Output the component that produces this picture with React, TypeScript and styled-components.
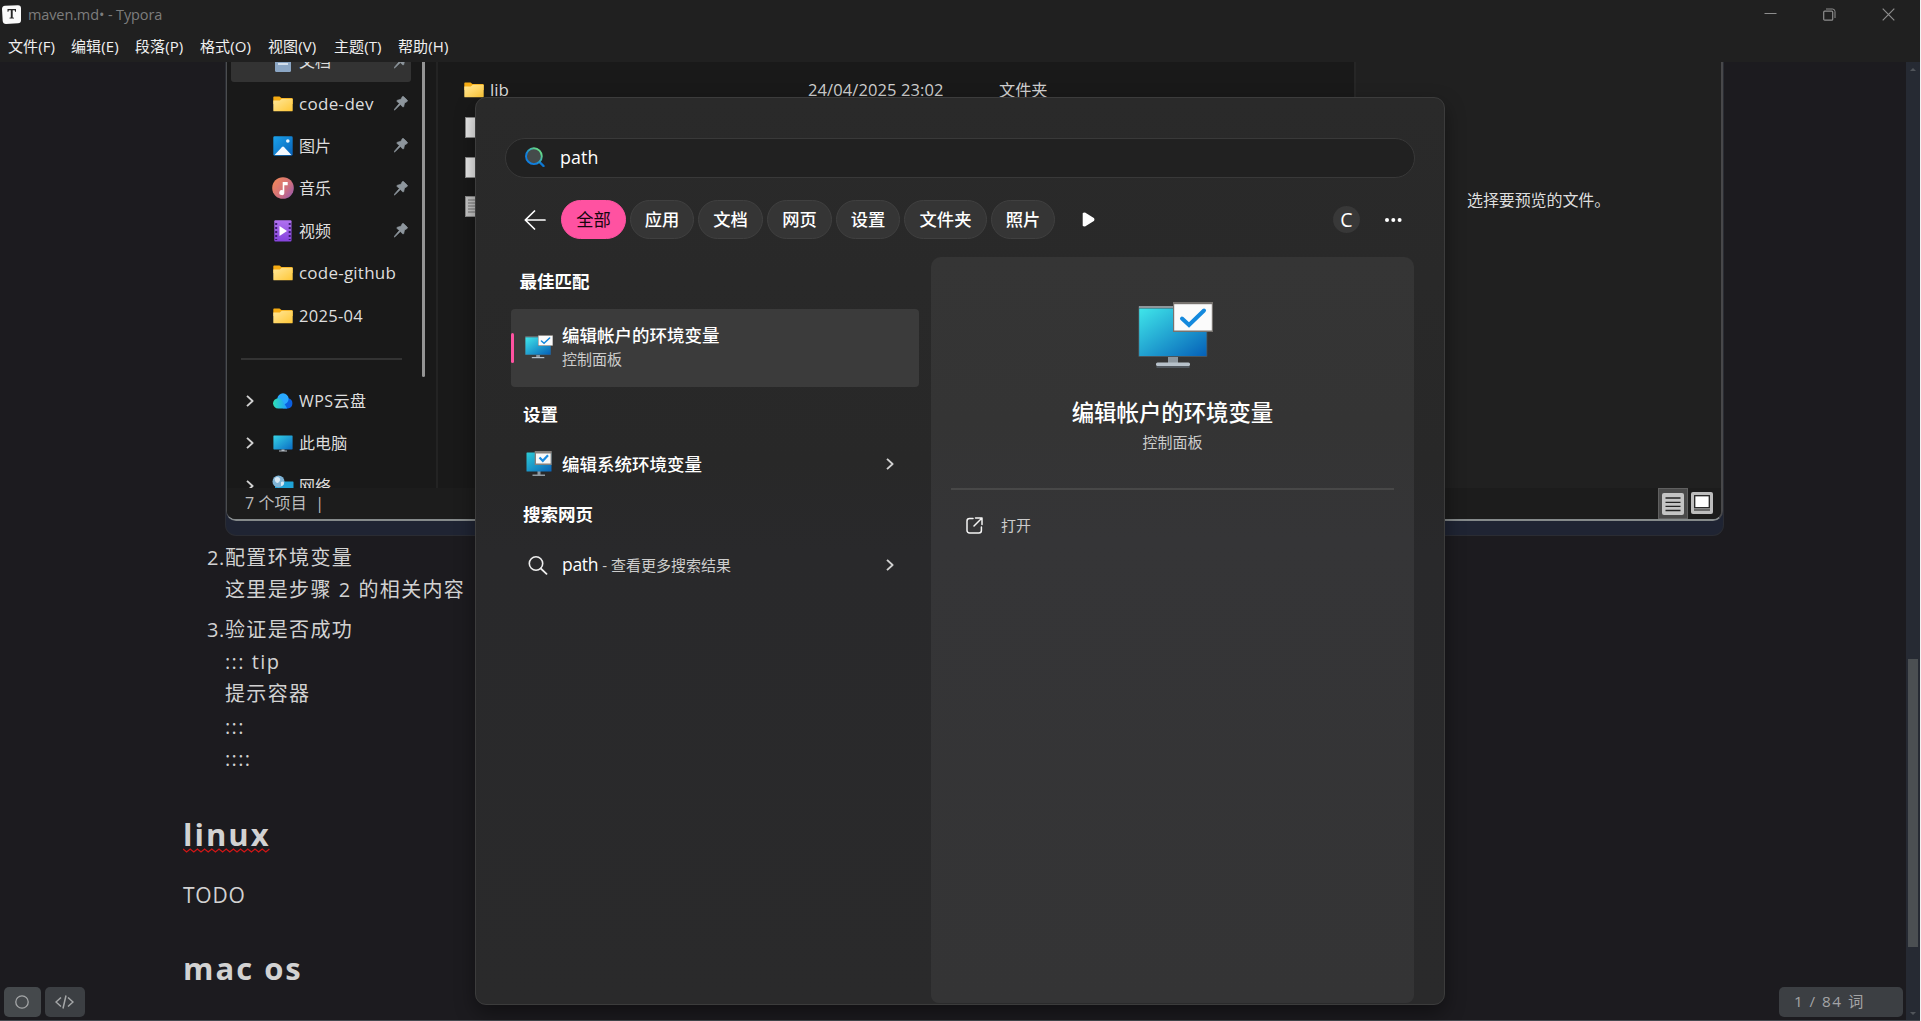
import React from "react";
import styled, { createGlobalStyle } from "styled-components";

const UI = `"Open Sans", "Noto Sans CJK SC", sans-serif`;

const Global = createGlobalStyle`
  * { box-sizing: border-box; }
  html, body { margin: 0; padding: 0; background: #1c1b1f; overflow: hidden; }
  svg { display: block; flex: none; }
`;

/* ---------- application frame ---------- */

const Window = styled.div`
  position: relative;
  width: 1921px;
  height: 1021px;
  display: flex;
  flex-direction: column;
  overflow: hidden;
  background: #1c1b1f;
  border-right: 1px solid #f3f3f3;
  font-family: ${UI};
  white-space: nowrap;
`;

const TitleBar = styled.header`
  height: 30px;
  flex: none;
  display: flex;
  align-items: center;
  padding: 0 0 2px 2px;
  background: #202020;
`;

const AppTitle = styled.span`
  flex: 1;
  margin-left: 7px;
  padding-top: 1px;
  font-size: 14.5px;
  letter-spacing: -0.12px;
  line-height: 20px;
  color: #7d7d7d;
`;

const WindowControls = styled.div`
  display: flex;
  gap: 46px;
  padding-right: 25px;
  color: #8d8d8d;
`;

const MenuBar = styled.nav`
  height: 32px;
  flex: none;
  display: flex;
  align-items: center;
  padding-left: 8px;
  background: #202020;
`;

const MenuItem = styled.span<{ $w: number }>`
  width: ${(p) => p.$w}px;
  font-size: 15px;
  line-height: 20px;
  letter-spacing: 0.1px;
  color: #f0f0f0;
`;

const Workspace = styled.main`
  flex: 1;
  min-height: 0;
  display: flex;
  border-bottom: 1px solid #454a50;
`;

const Document = styled.article`
  flex: 1;
  min-width: 0;
  overflow: hidden;
  color: #d2d2d2;
`;

const ScrollTrack = styled.div`
  width: 14px;
  flex: none;
  display: flex;
  flex-direction: column;
  align-items: center;
  padding: 6px 0 5px;
  background: #262a33;
`;

const ScrollThumb = styled.div`
  width: 10px;
  height: 288px;
  margin: 588px 0 auto;
  background: #4b4f52;
`;

/* ---------- embedded picture of a file explorer ---------- */

const Figure = styled.figure`
  width: 1499px;
  height: 474px;
  margin: 0 0 0 225px;
  background: #1f2433;
  border: 1px solid #2a2c33;
  border-top: 0;
  border-radius: 0 0 11px 11px;
`;

const Explorer = styled.div`
  height: 459px;
  display: flex;
  flex-direction: column;
  overflow: hidden;
  border: 1px solid #4b4d4f;
  border-top: 0;
  border-right: 2px solid #48484a;
  border-bottom: 2px solid #858a8b;
  border-radius: 0 0 10px 10px;
  background: #191919;
  color: #dedede;
`;

const ExplorerBody = styled.div`
  height: 426px;
  flex: none;
  display: flex;
  overflow: hidden;
`;

const NavPane = styled.div`
  width: 191px;
  flex: none;
  height: 470px;
  margin-top: -22px;
  padding-left: 4px;
`;

const NavRow = styled.div<{ $active?: boolean }>`
  width: 180px;
  height: 42.4px;
  display: flex;
  align-items: center;
  border-radius: 3px;
  background: ${(p) => (p.$active ? "#333333" : "transparent")};
`;

const NavChevron = styled.span`
  width: 42px;
  display: flex;
  padding-left: 15px;
`;

const NavIcon = styled.span`
  width: 20px;
  display: flex;
  justify-content: center;
`;

const NavLabel = styled.span<{ $ls?: number; $size?: number }>`
  flex: 1;
  margin-left: 6px;
  font-size: ${(p) => p.$size ?? 16}px;
  line-height: 22px;
  letter-spacing: ${(p) => p.$ls ?? 0}px;
`;

const NavPin = styled.span`
  width: 17px;
`;

const NavRule = styled.div`
  height: 43px;
  display: flex;
  align-items: center;
  padding: 1px 0 0 10px;

  &::after {
    content: "";
    width: 161px;
    height: 2px;
    background: #333333;
  }
`;

const NavScroll = styled.div`
  width: 3px;
  height: 315px;
  margin-left: 4px;
  flex: none;
  border-radius: 0 0 2px 2px;
  background: #949494;
`;

const FileList = styled.div`
  width: 918px;
  flex: none;
  margin-left: 11px;
  padding: 12px 0 0 26px;
  border-left: 2px solid #232323;
`;

const FileRow = styled.div`
  height: 31px;
  display: grid;
  grid-template-columns: 26px 318px 191px auto;
  align-items: center;
  font-size: 17px;
  line-height: 22px;
`;

const FileDate = styled.span`
  font-size: 16.5px;
  letter-spacing: 0.1px;
  color: #cfcfcf;
`;

const FileKind = styled.span`
  font-size: 16.2px;
  color: #cfcfcf;
`;

const FileStack = styled.div`
  display: flex;
  flex-direction: column;
  gap: 18.5px;
  padding: 12px 0 0 1px;
`;

const PreviewPane = styled.div`
  flex: 1;
  padding: 126px 0 0 111px;
  border-left: 2px solid #262626;
  background: #202020;
  font-size: 16px;
  line-height: 24px;
  letter-spacing: -0.1px;
`;

const StatusBar = styled.div`
  flex: 1;
  display: flex;
  align-items: center;
  padding: 0 5px 0 18px;
  background: #1c1c1c;
  font-size: 16px;
  line-height: 20px;
  color: #bcbcbc;
`;

const StatusText = styled.span`
  flex: 1;
  padding-bottom: 2px;
  white-space: pre;
  letter-spacing: 0.1px;
`;

const ViewButton = styled.span<{ $on?: boolean }>`
  width: ${(p) => (p.$on ? 30 : 28)}px;
  height: 31px;
  display: flex;
  align-items: center;
  justify-content: center;
  padding-bottom: ${(p) => (p.$on ? 0 : 2)}px;
  background: ${(p) => (p.$on ? "#4a4a4a" : "transparent")};
  border: 1px solid ${(p) => (p.$on ? "#606060" : "transparent")};
`;

/* ---------- markdown body ---------- */

const Steps = styled.ol`
  list-style: none;
  margin: 6px 0 0;
  padding: 0 0 0 207px;
  font-size: 20px;
  line-height: 32.2px;
  letter-spacing: 1.35px;
  word-spacing: 0.4px;
`;

const Step = styled.li`
  display: flex;
  margin-bottom: 7.5px;
`;

const StepNo = styled.span`
  width: 18px;
  letter-spacing: 0.5px;
`;

const StepBody = styled.div`
  display: flex;
  flex-direction: column;
`;

const Heading = styled.h2`
  margin: 0 0 0 183px;
  font-size: 31px;
  line-height: 44px;
  font-weight: 700;
  letter-spacing: 2px;
`;

const Misspelled = styled.span`
  display: flex;
  flex-direction: column;
  height: 44px;
`;

const Squiggle = styled.svg`
  margin-top: -8px;
`;

const Paragraph = styled.p`
  margin: 23px 0 35px 183px;
  font-size: 21px;
  line-height: 32px;
  letter-spacing: 0.8px;
`;

const Section = styled.section`
  padding-top: 30px;
`;

/* ---------- floating footer controls ---------- */

const FooterLeft = styled.div`
  position: absolute;
  left: 4px;
  bottom: 4px;
  display: flex;
  gap: 4px;
`;

const FooterButton = styled.span<{ $w: number; $bg: string }>`
  width: ${(p) => p.$w}px;
  height: 30px;
  display: flex;
  align-items: center;
  justify-content: center;
  padding-right: 1px;
  border-radius: 5px;
  background: ${(p) => p.$bg};
`;

const WordCount = styled.div`
  position: absolute;
  right: 17px;
  bottom: 4px;
  width: 124px;
  height: 30px;
  padding-left: 15px;
  border-radius: 5px;
  background: #3c3f43;
  font-size: 15.3px;
  line-height: 29px;
  letter-spacing: 1.45px;
  color: #a3a4a6;
`;

/* ---------- start-menu search flyout ---------- */

const Flyout = styled.section`
  position: absolute;
  left: 475px;
  top: 97px;
  width: 970px;
  height: 908px;
  display: flex;
  flex-direction: column;
  padding: 40px 29px 0 29px;
  overflow: hidden;
  border: 1px solid #3c3c3c;
  border-radius: 11px;
  background: linear-gradient(#2a2a2a 0%, #282828 40%, #29292b 50%, #2a2a2b 100%);
  box-shadow: 0 8px 20px rgba(0, 0, 0, 0.4);
  color: #ffffff;
`;

const SearchBox = styled.div`
  height: 40px;
  flex: none;
  display: flex;
  align-items: center;
  gap: 15px;
  padding: 0 0 2px 19px;
  border: 1px solid #393939;
  border-radius: 20px;
  background: #212121;
  font-size: 17.8px;
  letter-spacing: 0.1px;
`;

const FilterBar = styled.div`
  height: 39px;
  flex: none;
  display: flex;
  align-items: center;
  margin-top: 22px;
  padding-left: 19px;
`;

const Chips = styled.div`
  display: flex;
  gap: 4px;
  margin: 0 27px 0 15px;
`;

const Chip = styled.span<{ $w: number; $on?: boolean }>`
  width: ${(p) => p.$w}px;
  height: 39px;
  display: flex;
  align-items: center;
  justify-content: center;
  padding-bottom: 2px;
  border: 1px solid ${(p) => (p.$on ? "#ff52a1" : "#404040")};
  border-radius: 20px;
  background: ${(p) => (p.$on ? "#ff52a1" : "#353535")};
  color: ${(p) => (p.$on ? "#16060e" : "#ffffff")};
  font-size: 17.3px;
  font-weight: ${(p) => (p.$on ? 400 : 500)};
`;

const Avatar = styled.span`
  width: 27px;
  height: 27px;
  margin-left: auto;
  display: flex;
  align-items: center;
  justify-content: center;
  padding-bottom: 1px;
  border-radius: 50%;
  background: #383838;
  font-size: 19.5px;
  font-weight: 500;
`;

const Results = styled.div`
  flex: 1;
  display: flex;
  gap: 12px;
  margin-top: 18px;
  padding: 0 0 1px 6px;
`;

const ResultList = styled.div`
  width: 408px;
  flex: none;
`;

const GroupTitle = styled.h3<{ $h: number; $x: number; $lift: number }>`
  height: ${(p) => p.$h}px;
  margin: 0;
  padding: 0 0 ${(p) => p.$lift}px ${(p) => p.$x}px;
  display: flex;
  align-items: center;
  font-size: 17.5px;
  font-weight: 700;
`;

const BestMatch = styled.div`
  height: 78px;
  display: flex;
  align-items: center;
  border-radius: 4px;
  background: #3b3b3b;
`;

const Accent = styled.i`
  width: 3px;
  height: 30px;
  margin-right: 11px;
  border-radius: 2px;
  background: #ff52a1;
`;

const BestIcon = styled.div`
  padding-bottom: 2px;
`;

const BestText = styled.div`
  display: flex;
  flex-direction: column;
  margin: -4px 0 0 9px;
`;

const ItemTitle = styled.span`
  font-size: 17.5px;
  line-height: 25px;
  font-weight: 500;
`;

const ItemNote = styled.span`
  font-size: 15px;
  line-height: 22px;
  color: #cccccc;
`;

const ResultRow = styled.div<{ $h: number }>`
  height: ${(p) => p.$h}px;
  display: flex;
  align-items: center;
  padding: 0 25px 0 15px;
`;

const RowText = styled.span`
  flex: 1;
  display: flex;
  align-items: baseline;
  gap: 4px;
  margin-left: 10px;
`;

const Query = styled.span`
  font-size: 17.5px;
  line-height: 25px;
  letter-spacing: -0.3px;
`;

const Detail = styled.div`
  width: 483px;
  flex: none;
  display: flex;
  flex-direction: column;
  align-items: center;
  padding-top: 45px;
  border-radius: 10px 10px 8px 8px;
  background: linear-gradient(#353535 0%, #343434 22%, #353537 38%, #343435 100%);
`;

const DetailArt = styled.div`
  padding-left: 5px;
`;

const DetailTitle = styled.h1`
  margin: 29px 0 2px;
  font-size: 22.4px;
  line-height: 32px;
  font-weight: 500;
`;

const DetailRule = styled.hr`
  width: 443px;
  height: 2px;
  margin: 35px 0 0;
  border: 0;
  background: #484848;
`;

const Action = styled.div`
  width: 443px;
  display: flex;
  align-items: center;
  gap: 18px;
  margin-top: 24px;
  padding-left: 15px;
`;

/* ---------- drawings ---------- */

const AppLogo = () => (
  <svg width="19" height="19" viewBox="0 0 19 19">
    <path d="M3 .8 16 .2q3 0 3 3v12q0 3-3 3L4 19Q1 19 .7 16L0 4Q0 1 3 .8Z" fill="#fbfbfb" />
    <path d="M5.500 4h8.500v2.800h-.9l-.4-1.600h-2v7.200l1.300.3v.8H7.500v-.8l1.300-.3V5.200h-2l-.4 1.600h-.9Z" fill="#262626" />
  </svg>
);

const FolderIcon = () => (
  <svg width="20" height="16" viewBox="0 0 20 16">
    <defs>
      <linearGradient id="folder" x1="0" y1="0" x2="1" y2="1">
        <stop offset="0" stopColor="#ffe79a" />
        <stop offset="1" stopColor="#ffc736" />
      </linearGradient>
    </defs>
    <path d="M.3 1.2Q.3.4 1.1.4h5.4l2 1.7h10.2q1 0 1 1V8H.3Z" fill="#f5ab12" />
    <path d="M.3 4.5h6.5l2-1.7h10.9v11.6q0 .9-.9.9H1.2q-.9 0-.9-.9Z" fill="url(#folder)" />
  </svg>
);

const DocIcon = () => (
  <svg width="16" height="21" viewBox="0 0 16 21">
    <rect width="16" height="21" rx="1.5" fill="#8ba6c4" />
    <path d="M3 6h10M3 9.5h10M3 13h10" stroke="#e9f0f8" strokeWidth="1.4" />
  </svg>
);

const PictureIcon = () => (
  <svg width="20" height="20" viewBox="0 0 20 20">
    <defs>
      <linearGradient id="pic" x1="0" y1="0" x2="1" y2="1">
        <stop offset="0" stopColor="#1ba2ea" />
        <stop offset="1" stopColor="#0760b8" />
      </linearGradient>
    </defs>
    <rect x=".3" y=".3" width="19.4" height="19.4" rx="1.4" fill="url(#pic)" />
    <path d="m1.600 19 7.200-7.800q1.200-1.200 2.400 0l7.200 7.800Z" fill="#f4f9ff" />
    <circle cx="14.8" cy="5" r="1.8" fill="#eaf6ff" />
  </svg>
);

const MusicIcon = () => (
  <svg width="22" height="22" viewBox="0 0 22 22">
    <defs>
      <linearGradient id="music" x1="0" y1=".2" x2="1" y2="1">
        <stop offset="0" stopColor="#f0875a" />
        <stop offset=".55" stopColor="#cf6f7e" />
        <stop offset="1" stopColor="#8d55b5" />
      </linearGradient>
    </defs>
    <circle cx="11" cy="11" r="10.8" fill="url(#music)" />
    <path d="M10.700 5v8.300a2.500 2.500 0 1 0 1.600 2.200V8.200h3.400V5Z" fill="#fff" />
  </svg>
);

const VideoIcon = () => (
  <svg width="18" height="22" viewBox="0 0 18 22">
    <defs>
      <linearGradient id="vid" x1="0" y1="0" x2="0" y2="1">
        <stop offset="0" stopColor="#b071f0" />
        <stop offset="1" stopColor="#8543dc" />
      </linearGradient>
    </defs>
    <rect x=".3" y=".3" width="17.2" height="21.2" rx="1" fill="url(#vid)" />
    <path d="M2.200 3v17M15.700 3v17" stroke="#3c1b70" strokeWidth="2" strokeDasharray="2 2" />
    <path d="M5.500 6v10l7.500-5Z" fill="#fff" />
  </svg>
);

const CloudIcon = () => (
  <svg width="20" height="16" viewBox="0 0 20 16">
    <defs>
      <linearGradient id="cloud" x1="0" y1="0" x2="1" y2="0">
        <stop offset="0" stopColor="#2fe0b5" />
        <stop offset="1" stopColor="#1f9dff" />
      </linearGradient>
    </defs>
    <path d="M4.500 5a5.800 5.800 0 0 1 11 .3 5.200 5.200 0 0 1-.7 10.200H10Z" fill="#0b5fe0" />
    <circle cx="10" cy="5.9" r="5.6" fill="#29a9ff" />
    <path d="M5.200 5.200q3 0 5 3.200l4 7.100H5.200a5.150 5.150 0 0 1 0-10.300Z" fill="url(#cloud)" />
  </svg>
);

const PcIcon = () => (
  <svg width="20" height="17" viewBox="0 0 20 17">
    <defs>
      <linearGradient id="pc" x1="0" y1="0" x2="1" y2="1">
        <stop offset="0" stopColor="#36d3e6" />
        <stop offset="1" stopColor="#0a6cc4" />
      </linearGradient>
    </defs>
    <rect x=".4" y=".4" width="19.2" height="14" rx=".6" fill="url(#pc)" />
    <path d="M8.500 14.400h3v1.200H14v1H6v-1h2.500Z" fill="#b4bcc4" />
  </svg>
);

const NetworkIcon = () => (
  <svg width="22" height="21" viewBox="0 0 22 21">
    <rect x="3" y="6.500" width="18.500" height="12" rx=".6" fill="#1fa3d8" />
    <circle cx="6.500" cy="6.500" r="6" fill="#7fb4d6" />
    <path d="M2.500 3.500q3-2.500 5-.5T6 8Q3 8 2.500 3.500ZM9 7q3-1.500 3 1t-3 3Z" fill="#d5e8f4" />
  </svg>
);

const Pin = () => (
  <svg width="14" height="15" viewBox="0 0 14 15">
    <path
      d="M8.300.7q.7-.7 1.400 0l3.500 3.400q.8.800-.1 1.400L10.500 7 9.700 10.500q-.3 1-1.100.2L6.300 8.500 1 13.800l-.8.3.3-.9L5.300 7.600 3.100 5.400q-.7-.8.300-1.100L6.900 3.300Z"
      fill="#8e969d"
      stroke="#8e969d"
      strokeWidth=".7"
    />
  </svg>
);

const Chevron = () => (
  <svg width="8" height="12" viewBox="0 0 8 12">
    <path d="m1 .9 5.600 5.100L1 11.100" fill="none" stroke="#d0d0d0" strokeWidth="1.9" strokeLinejoin="round" />
  </svg>
);

/* Monitor with a tick card over its upper right corner. */
const MonitorCheck = ({ width, height, id }: { width: number; height: number; id: string }) => (
  <svg width={width} height={height} viewBox="0 0 75 66" preserveAspectRatio="none">
    <defs>
      <linearGradient id={id} x1="0" y1="0" x2="1" y2="1">
        <stop offset="0" stopColor="#3fe6ea" />
        <stop offset="1" stopColor="#0560b8" />
      </linearGradient>
    </defs>
    <path d="M30 54h10v7H30Z" fill="#8d979f" />
    <rect x="18" y="60.500" width="34" height="3.500" rx="1.500" fill="#b7c1ca" />
    <rect x="18.500" y="64" width="33" height="2" fill="#50565c" />
    <rect x=".3" y="4" width="69" height="51" rx="1" fill="#49545b" />
    <path d="M1 5h35" stroke="#a4adb1" strokeWidth="1.300" />
    <rect x="1.200" y="6.500" width="67.300" height="47.500" fill={`url(#${id})`} />
    <rect x="35" y="0" width="40" height="30" fill="#77736f" />
    <rect x="36.200" y="2.200" width="37.600" height="26.300" fill="#fbfbfb" />
    <path d="m44 16.500 7 6.500L66 8.500" fill="none" stroke="#1489dd" strokeWidth="4" strokeLinecap="round" />
  </svg>
);

/* Squarer variant of the monitor used by the system entry. */
const SystemMonitor = () => (
  <svg width="26" height="26" viewBox="0 0 26 26">
    <defs>
      <linearGradient id="sysmon" x1="0" y1="0" x2="1" y2="1">
        <stop offset="0" stopColor="#2ccbd6" />
        <stop offset="1" stopColor="#0a63b8" />
      </linearGradient>
    </defs>
    <path d="M11.500 20h3v3.500H19V25H6.500v-1.500h5Z" fill="#8f99a1" />
    <rect x=".5" y="1.500" width="25" height="19" rx=".6" fill="url(#sysmon)" />
    <rect x="8.700" y="0" width="17" height="14" fill="#85807c" />
    <rect x="10" y="2.500" width="14.600" height="10" fill="#f8f8f8" />
    <path d="m13.500 6.500 3.300 3.300 5.200-5.500" fill="none" stroke="#1a8be0" strokeWidth="2.200" />
  </svg>
);

const SearchColor = () => (
  <svg width="20" height="20" viewBox="0 0 20 20">
    <defs>
      <linearGradient id="glass" x1="0" y1="1" x2="1" y2="0">
        <stop offset=".35" stopColor="#0f7fe0" />
        <stop offset=".8" stopColor="#62d68a" />
      </linearGradient>
    </defs>
    <path d="m14 14.500 4.500 4.500" stroke="#0d78d4" strokeWidth="2.400" strokeLinecap="round" />
    <circle cx="8.900" cy="9.200" r="7.900" fill="#454b4b" stroke="url(#glass)" strokeWidth="1.900" />
  </svg>
);

const navItems = [
  { label: "code-dev", icon: <FolderIcon />, size: 17, ls: 0.32, pin: true },
  { label: "图片", icon: <PictureIcon />, pin: true },
  { label: "音乐", icon: <MusicIcon />, pin: true },
  { label: "视频", icon: <VideoIcon />, pin: true },
  { label: "code-github", icon: <FolderIcon />, size: 17, ls: 0.22 },
  { label: "2025-04", icon: <FolderIcon />, size: 16.5, ls: 0.3 },
];

const treeItems = [
  { label: "WPS云盘", icon: <CloudIcon />, ls: 0.45 },
  { label: "此电脑", icon: <PcIcon />, ls: 0.1 },
  { label: "网络", icon: <NetworkIcon />, ls: 0 },
];

const menus: [string, number][] = [
  ["文件(F)", 63],
  ["编辑(E)", 64],
  ["段落(P)", 65],
  ["格式(O)", 68],
  ["视图(V)", 66],
  ["主题(T)", 64],
  ["帮助(H)", 60],
];

const filters: [string, number][] = [
  ["全部", 65],
  ["应用", 64],
  ["文档", 65],
  ["网页", 65],
  ["设置", 64],
  ["文件夹", 83],
  ["照片", 64],
];

const ExplorerShot = () => (
  <Figure>
    <Explorer>
      <ExplorerBody>
        <NavPane>
          <NavRow $active>
            <NavChevron />
            <NavIcon><DocIcon /></NavIcon>
            <NavLabel>文档</NavLabel>
            <NavPin><Pin /></NavPin>
          </NavRow>
          {navItems.map((n) => (
            <NavRow key={n.label}>
              <NavChevron />
              <NavIcon>{n.icon}</NavIcon>
              <NavLabel $ls={n.ls} $size={n.size}>{n.label}</NavLabel>
              {n.pin && <NavPin><Pin /></NavPin>}
            </NavRow>
          ))}
          <NavRule />
          {treeItems.map((n) => (
            <NavRow key={n.label}>
              <NavChevron><Chevron /></NavChevron>
              <NavIcon>{n.icon}</NavIcon>
              <NavLabel $ls={n.ls}>{n.label}</NavLabel>
            </NavRow>
          ))}
        </NavPane>
        <NavScroll />
        <FileList>
          <FileRow>
            <FolderIcon />
            <span>lib</span>
            <FileDate>24/04/2025 23:02</FileDate>
            <FileKind>文件夹</FileKind>
          </FileRow>
          <FileStack>
            {[0, 1, 2].map((i) => (
              <svg key={i} width="16" height="21" viewBox="0 0 16 21">
                <rect x=".5" y=".5" width="15" height="20" fill={i === 2 ? "#c9c9c9" : "#ececec"} stroke="#8c8c8c" />
                {i === 2 && <path d="M3 4h10M3 7h10M3 10h10M3 13h10M3 16h10" stroke="#777" />}
              </svg>
            ))}
          </FileStack>
        </FileList>
        <PreviewPane>选择要预览的文件。</PreviewPane>
      </ExplorerBody>
      <StatusBar>
        <StatusText>{"7 个项目  |"}</StatusText>
        <ViewButton $on>
          <svg width="22" height="22" viewBox="0 0 22 22">
            <rect width="22" height="22" rx="2" fill="#c4c4c4" />
            <path d="M3.500 5h15M3.500 9.300h15M3.500 13.300h15M3.500 17.500h15" stroke="#222" strokeWidth="1.300" />
          </svg>
        </ViewButton>
        <ViewButton>
          <svg width="22" height="22" viewBox="0 0 22 22">
            <rect width="22" height="22" rx="2" fill="#bdbdbd" />
            <rect x="3.700" y="3.700" width="14.600" height="12" fill="#fff" stroke="#222" strokeWidth="1.300" />
            <path d="M3 18h16" stroke="#333" strokeWidth="1.200" />
          </svg>
        </ViewButton>
      </StatusBar>
    </Explorer>
  </Figure>
);

const SearchFlyout = () => (
  <Flyout>
    <SearchBox>
      <SearchColor />
      path
    </SearchBox>
    <FilterBar>
      <svg width="22" height="20" viewBox="0 0 22 20">
        <path d="M10.500 1 1.300 10l9.200 9M1.500 10H21" fill="none" stroke="#fff" strokeWidth="1.700" strokeLinecap="round" strokeLinejoin="round" />
      </svg>
      <Chips>
        {filters.map(([label, w], i) => (
          <Chip key={label} $w={w} $on={i === 0}>{label}</Chip>
        ))}
      </Chips>
      <svg width="13" height="15" viewBox="0 0 13 15">
        <path d="M1.500 1.500v12l1.500.1 8-5q1.300-1.100 0-2.200L3 1.300Z" fill="#fff" stroke="#fff" strokeWidth="1.600" strokeLinejoin="round" />
      </svg>
      <Avatar>C</Avatar>
      <svg width="55" height="6" viewBox="0 0 55 6">
        <circle cx="27" cy="3" r="2" fill="#fff" />
        <circle cx="33.300" cy="3" r="2" fill="#fff" />
        <circle cx="39.600" cy="3" r="2" fill="#fff" />
      </svg>
    </FilterBar>
    <Results>
      <ResultList>
        <GroupTitle $h={52} $x={8.5} $lift={5}>最佳匹配</GroupTitle>
        <BestMatch>
          <Accent />
          <BestIcon><MonitorCheck width={28} height={24} id="mon-small" /></BestIcon>
          <BestText>
            <ItemTitle>编辑帐户的环境变量</ItemTitle>
            <ItemNote>控制面板</ItemNote>
          </BestText>
        </BestMatch>
        <GroupTitle $h={55} $x={12} $lift={3}>设置</GroupTitle>
        <ResultRow $h={44}>
          <SystemMonitor />
          <RowText><ItemTitle>编辑系统环境变量</ItemTitle></RowText>
          <Chevron />
        </ResultRow>
        <GroupTitle $h={57} $x={12} $lift={2}>搜索网页</GroupTitle>
        <ResultRow $h={43}>
          <svg width="26" height="20" viewBox="0 0 26 20">
            <circle cx="10" cy="8.500" r="6.700" fill="none" stroke="#eee" strokeWidth="1.600" />
            <path d="m14.800 13.500 5.700 5.300" stroke="#eee" strokeWidth="1.800" strokeLinecap="round" />
          </svg>
          <RowText>
            <Query>path</Query>
            <ItemNote>- 查看更多搜索结果</ItemNote>
          </RowText>
          <Chevron />
        </ResultRow>
      </ResultList>
      <Detail>
        <DetailArt>
          <MonitorCheck width={75} height={66} id="mon-large" />
        </DetailArt>
        <DetailTitle>编辑帐户的环境变量</DetailTitle>
        <ItemNote>控制面板</ItemNote>
        <DetailRule />
        <Action>
          <svg width="17" height="17" viewBox="0 0 17 17">
            <path d="M7 1.600H3.500a2.500 2.500 0 0 0-2.500 2.500v9.400A2.500 2.500 0 0 0 3.500 16h9.400a2.500 2.500 0 0 0 2.500-2.500V10M9.500 1H16v6.500M16 1 8 9" fill="none" stroke="#f4f4f4" strokeWidth="1.500" strokeLinecap="round" strokeLinejoin="round" />
          </svg>
          <ItemNote>打开</ItemNote>
        </Action>
      </Detail>
    </Results>
  </Flyout>
);

export default function App() {
  return (
    <Window>
      <Global />
      <TitleBar>
        <AppLogo />
        <AppTitle>maven.md• - Typora</AppTitle>
        <WindowControls>
          <svg width="13" height="13" viewBox="0 0 13 13"><path d="M.500 5.500h12" stroke="currentColor" /></svg>
          <svg width="13" height="13" viewBox="0 0 13 13">
            <path d="M3 1h6.500Q12 1 12 3.500V10" fill="none" stroke="currentColor" />
            <rect x=".7" y="3.200" width="9" height="9" rx="1" fill="none" stroke="currentColor" strokeWidth="1.200" />
          </svg>
          <svg width="13" height="13" viewBox="0 0 13 13"><path d="m.7.7 11.600 11.600M12.300.7.7 12.300" stroke="currentColor" strokeWidth="1.200" /></svg>
        </WindowControls>
      </TitleBar>
      <MenuBar>
        {menus.map(([m, w]) => <MenuItem key={m} $w={w}>{m}</MenuItem>)}
      </MenuBar>
      <Workspace>
        <Document>
          <ExplorerShot />
          <Steps>
            <Step>
              <StepNo>2.</StepNo>
              <StepBody>
                <span>配置环境变量</span>
                <span>这里是步骤 2 的相关内容</span>
              </StepBody>
            </Step>
            <Step>
              <StepNo>3.</StepNo>
              <StepBody>
                <span>验证是否成功</span>
                <span>::: tip</span>
                <span>提示容器</span>
                <span>:::</span>
                <span>::::</span>
              </StepBody>
            </Step>
          </Steps>
          <Section>
            <Heading>
              <Misspelled>
                linux
                <Squiggle width="87" height="5" viewBox="0 0 87 5">
                  <path
                    d={"M0 1" + Array.from({ length: 12 }, () => "l3.600 3 3.600-3").join("")}
                    fill="none"
                    stroke="#d01616"
                    strokeWidth="1.300"
                  />
                </Squiggle>
              </Misspelled>
            </Heading>
            <Paragraph>TODO</Paragraph>
            <Heading>mac os</Heading>
          </Section>
        </Document>
        <ScrollTrack>
          <svg width="6" height="3" viewBox="0 0 6 3"><path d="M0 3 3 0l3 3Z" fill="#50545a" /></svg>
          <ScrollThumb />
          <svg width="6" height="3" viewBox="0 0 6 3"><path d="M0 0h6L3 3Z" fill="#50545a" /></svg>
        </ScrollTrack>
      </Workspace>
      <FooterLeft>
        <FooterButton $w={37} $bg="#45494c">
          <svg width="14" height="14" viewBox="0 0 14 14"><circle cx="7" cy="7" r="6.200" fill="none" stroke="#a5a7a8" strokeWidth="1.300" /></svg>
        </FooterButton>
        <FooterButton $w={40} $bg="#3c3f43">
          <svg width="19" height="14" viewBox="0 0 19 14">
            <path d="M6 2.500 1 7l5 4.500M13 2.500 18 7l-5 4.500M11 .5 8 13.500" fill="none" stroke="#a5a7a8" strokeWidth="1.500" />
          </svg>
        </FooterButton>
      </FooterLeft>
      <WordCount>1 / 84 词</WordCount>
      <SearchFlyout />
    </Window>
  );
}
